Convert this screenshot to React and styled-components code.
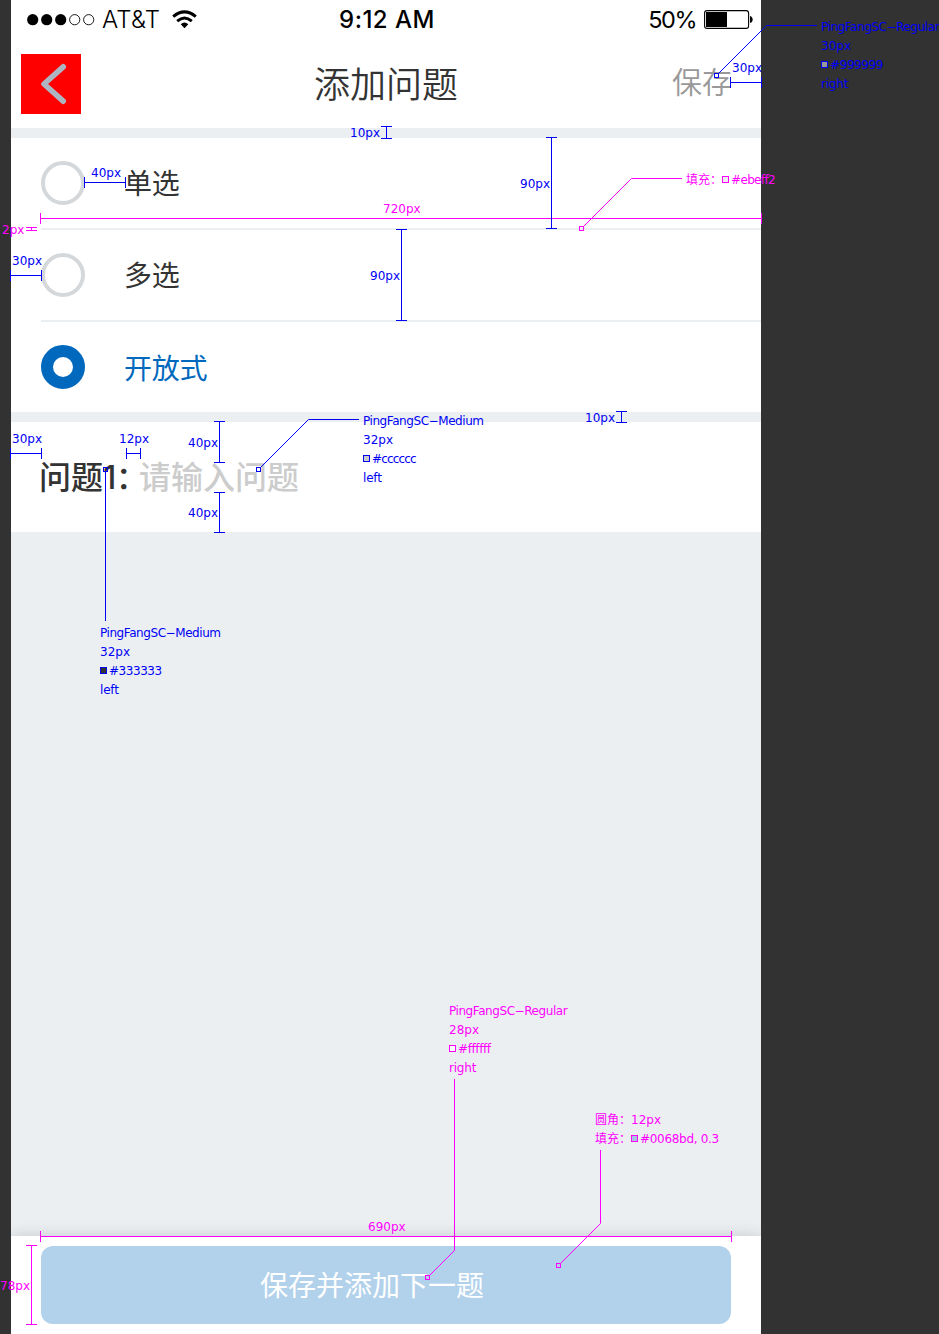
import React from 'react';
import styled, { createGlobalStyle } from 'styled-components';

const GlobalStyle = createGlobalStyle`
  *, *::before, *::after { box-sizing: border-box; }
  html, body { margin: 0; background: #323232; }
  body { overflow: hidden; }
`;

const BLUE = '#0000f5';
const PINK = '#ff00ff';
const CJK = '"Noto Sans CJK SC", sans-serif';

const Board = styled.div`
  position: relative;
  width: 939px;
  height: 1334px;
  padding-left: 11px;
  overflow: hidden;
  background: #323232;
  font-family: ${CJK};
`;

const Phone = styled.main`
  display: flex;
  flex-direction: column;
  width: 750px;
  height: 1334px;
  background: #ebeff2;
`;

const StatusBar = styled.div`
  display: grid;
  grid-template-columns: 1fr auto 1fr;
  align-items: center;
  height: 40px;
  padding: 0 7px 0 16px;
  background: #fff;
  color: #000;
  font-family: Inter, sans-serif;
  font-size: 24px;
  line-height: 40px;
`;

const Carrier = styled.div`
  display: flex;
  align-items: center;
`;

const CarrierName = styled.span`
  margin: 0 12px 0 7px;
  font-weight: 300;
  letter-spacing: 0.2px;
`;

const Clock = styled.span`
  margin-right: 7px;
  font-weight: 500;
  letter-spacing: 0.5px;
`;

const Power = styled.div`
  display: flex;
  align-items: center;
  justify-content: flex-end;
  gap: 8px;
  font-size: 23.5px;
  letter-spacing: -1.5px;
`;

const Header = styled.header`
  display: grid;
  grid-template-columns: 1fr auto 1fr;
  align-items: center;
  height: 88px;
  padding: 0 30px 0 10px;
  background: #fff;
`;

const BackButton = styled.button`
  display: flex;
  width: 60px;
  height: 60px;
  padding: 0;
  border: 0;
  background: #f00;
`;

const Title = styled.h1`
  margin: 0 0 4px 20px;
  color: #333;
  font-size: 36px;
  font-weight: 350;
  line-height: 84px;
`;

const SaveLink = styled.span`
  justify-self: end;
  margin: 0 -1px 8px 0;
  color: #999;
  font-size: 30px;
  font-weight: 350;
  line-height: 80px;
`;

const Options = styled.section`
  margin-top: 10px;
  padding-left: 30px;
  background: #fff;
`;

const Option = styled.label`
  display: flex;
  align-items: center;
  gap: 39px;
  height: ${({ $last }) => ($last ? 90 : 92)}px;
  border-bottom: ${({ $last }) => ($last ? '0' : '2px solid #ebeff2')};
  color: ${({ $checked }) => ($checked ? '#0068bd' : '#333')};
`;

const OptionText = styled.span`
  padding-bottom: ${({ $raised }) => ($raised ? 2 : 0)}px;
  font-size: 28px;
  line-height: 40px;
  letter-spacing: -0.3px;
`;

const Radio = styled.span`
  width: 44px;
  height: 44px;
  border: ${({ $checked }) => ($checked ? '12px solid #0068bd' : '4px solid #d5d8db')};
  border-radius: 50%;
  background: #fff;
`;

const Question = styled.section`
  display: flex;
  align-items: center;
  height: 110px;
  margin-top: 10px;
  padding: 0 0 4px 28px;
  background: #fff;
  font-size: 32px;
  font-weight: 500;
  line-height: 40px;
`;

const QuestionLabel = styled.span`
  width: 100px;
  color: #333;
  white-space: nowrap;
`;

const QuestionNumber = styled.span`
  font-family: Inter, sans-serif;
  line-height: 0;
  letter-spacing: -0.5px;
`;

const Colon = styled.span`
  letter-spacing: -13px;
`;

const Placeholder = styled.span`
  color: #ccc;
`;

const Footer = styled.footer`
  height: 98px;
  margin-top: auto;
  padding: 10px 30px;
  background: #fff;
  box-shadow: 0 0 14px rgba(0, 0, 0, 0.16);
  clip-path: inset(-20px 0 0 0);
`;

const SubmitButton = styled.button`
  display: block;
  width: 690px;
  height: 78px;
  padding: 0 28px 2px 0;
  border: 0;
  border-radius: 12px;
  background: #b2d1eb;
  color: #fff;
  font-family: ${CJK};
  font-size: 28px;
  line-height: 76px;
`;

const Markup = styled.div`
  position: absolute;
  inset: 0;
  pointer-events: none;
`;

const MarkupLines = styled.svg`
  position: absolute;
  inset: 0;
  display: block;
`;

const Note = styled.div`
  position: absolute;
  left: ${({ $x }) => $x}px;
  top: ${({ $y }) => $y}px;
  color: ${({ $color }) => $color};
  font-family: "DejaVu Sans", ${CJK};
  font-size: 12px;
  line-height: 19px;
  white-space: pre;
`;

const NoteLine = styled.div`
  display: flex;
  align-items: center;
  height: 19px;
  letter-spacing: ${({ $track }) => $track || 0}px;
`;

const Swatch = styled.i`
  width: 7px;
  height: 7px;
  margin: 0 2px 2px 0;
  border: 1px solid currentColor;
  background: ${({ $fill }) => $fill};
`;

const sizes = [
  [350, 124, '10px', BLUE], [520, 175, '90px', BLUE], [370, 267, '90px', BLUE],
  [91, 164, '40px', BLUE], [12, 252, '30px', BLUE], [12, 430, '30px', BLUE],
  [119, 430, '12px', BLUE], [188, 434, '40px', BLUE], [188, 504, '40px', BLUE],
  [585, 409, '10px', BLUE], [732, 59, '30px', BLUE],
  [383, 200, '720px', PINK], [2, 221, '2px', PINK],
  [368, 1218, '690px', PINK], [0, 1277, '78px', PINK],
];

const horizontals = [
  [730, 761, 82, BLUE], [84, 125, 182, BLUE], [10, 41, 275, BLUE],
  [10, 41, 453, BLUE], [126, 140, 453, BLUE], [40, 761, 218, PINK], [40, 731, 1236, PINK],
];

const verticals = [
  [386, 126, 138, BLUE], [551, 137, 228, BLUE], [401, 229, 320, BLUE],
  [621, 411, 422, BLUE], [219, 421, 462, BLUE], [219, 492, 532, BLUE],
  [31, 227, 230, PINK], [31, 1245, 1324, PINK],
];

const leaders = [
  { d: 'M817 25.5H766.5L718.5 73.5', box: [714, 73], color: BLUE },
  { d: 'M359 419.5H308.5L260.5 467.5', box: [256, 467], color: BLUE },
  { d: 'M105.5 621V471', box: [103, 467], color: BLUE },
  { d: 'M682 178.5H631.5L583.5 226.5', box: [579, 226], color: PINK },
  { d: 'M454.5 1079V1250.5L429.5 1275.5', box: [425, 1275], color: PINK },
  { d: 'M600.5 1150V1223.5L560.5 1263.5', box: [556, 1263], color: PINK },
];

function Signal() {
  return (
    <svg width="68" height="12" viewBox="0 0 68 12">
      {[0, 1, 2, 3, 4].map((i) => (
        <circle key={i} cx={5.7 + i * 14} cy="5.7" r={i < 3 ? 5.6 : 5.1}
          fill={i < 3 ? '#000' : 'none'} stroke={i < 3 ? 'none' : '#000'} strokeWidth="0.9" />
      ))}
    </svg>
  );
}

function Wifi() {
  return (
    <svg width="25" height="20" viewBox="0 0 25 20" fill="none" stroke="#000">
      <path d="M1.2 6.6Q12.5 -2.8 23.8 6.6" strokeWidth="3" />
      <path d="M5.2 11.2Q12.5 4.8 19.8 11.2" strokeWidth="2.9" />
      <path d="M8.7 14.3Q12.5 10.9 16.3 14.3L12.5 18.2Z" fill="#000" stroke="none" />
    </svg>
  );
}

function Battery() {
  return (
    <svg width="50" height="20" viewBox="0 0 50 20">
      <rect x="0.6" y="0.6" width="44" height="17.8" rx="2.5" fill="none" stroke="#000" strokeWidth="1.1" />
      <rect x="2" y="2" width="21" height="15" fill="#000" />
      <path d="M46 6C49.6 7 49.6 12 46 13Z" fill="#000" />
    </svg>
  );
}

function Markings() {
  return (
    <Markup>
      <MarkupLines width="939" height="1334" fill="none">
        {horizontals.map(([a, b, y, c]) => (
          <path key={`${a}-${y}`} stroke={c} d={`M${a} ${y + 0.5}H${b + 1}M${a + 0.5} ${y - 5}v11M${b + 0.5} ${y - 5}v11`} />
        ))}
        {verticals.map(([x, a, b, c]) => (
          <path key={`${x}-${a}`} stroke={c} d={`M${x + 0.5} ${a}V${b + 1}M${x - 5} ${a + 0.5}h11M${x - 5} ${b + 0.5}h11`} />
        ))}
        {leaders.map(({ d, box, color }) => (
          <g key={d} stroke={color}>
            <path d={d} />
            <rect x={box[0] + 0.5} y={box[1] + 0.5} width="4" height="4" />
          </g>
        ))}
      </MarkupLines>
      {sizes.map(([x, y, text, color]) => (
        <Note key={`${x}-${y}`} $x={x} $y={y} $color={color}>{text}</Note>
      ))}
      <Note $x={821} $y={18} $color={BLUE}>
        <NoteLine $track={-0.45}>PingFangSC−Regular</NoteLine>
        <NoteLine>30px</NoteLine>
        <NoteLine $track={-0.4}><Swatch $fill="#999" />#999999</NoteLine>
        <NoteLine $track={-0.2}>right</NoteLine>
      </Note>
      <Note $x={363} $y={412} $color={BLUE}>
        <NoteLine $track={-0.43}>PingFangSC−Medium</NoteLine>
        <NoteLine>32px</NoteLine>
        <NoteLine $track={-0.85}><Swatch $fill="#ccc" />#cccccc</NoteLine>
        <NoteLine $track={-0.2}>left</NoteLine>
      </Note>
      <Note $x={100} $y={624} $color={BLUE}>
        <NoteLine $track={-0.43}>PingFangSC−Medium</NoteLine>
        <NoteLine>32px</NoteLine>
        <NoteLine $track={-0.45}><Swatch $fill="#333" />#333333</NoteLine>
        <NoteLine $track={-0.2}>left</NoteLine>
      </Note>
      <Note $x={449} $y={1002} $color={PINK}>
        <NoteLine $track={-0.43}>PingFangSC−Regular</NoteLine>
        <NoteLine>28px</NoteLine>
        <NoteLine $track={-0.4}><Swatch $fill="#fff" />#ffffff</NoteLine>
        <NoteLine $track={-0.2}>right</NoteLine>
      </Note>
      <Note $x={686} $y={171} $color={PINK}>
        <NoteLine>填充：<Swatch $fill="#ebeff2" /></NoteLine>
      </Note>
      <Note $x={731} $y={171} $color={PINK}>
        <NoteLine $track={-0.65}>#ebeff2</NoteLine>
      </Note>
      <Note $x={595} $y={1111} $color={PINK}>
        <NoteLine>圆角：12px</NoteLine>
        <NoteLine>填充：<Swatch $fill="#a5c6df" /></NoteLine>
      </Note>
      <Note $x={640} $y={1130} $color={PINK}>
        <NoteLine $track={-0.3}>#0068bd, 0.3</NoteLine>
      </Note>
    </Markup>
  );
}

export default function App() {
  return (
    <>
      <GlobalStyle />
      <Board>
        <Phone>
          <StatusBar>
            <Carrier><Signal /><CarrierName>AT&amp;T</CarrierName><Wifi /></Carrier>
            <Clock>9:12 AM</Clock>
            <Power>50%<Battery /></Power>
          </StatusBar>
          <Header>
            <BackButton aria-label="返回">
              <svg width="60" height="60" viewBox="0 0 60 60" fill="none">
                <path d="M42.2 12.8L23 30L42.2 47.2" stroke="#adb5c2" strokeWidth="5.6" strokeLinecap="round" strokeLinejoin="round" />
              </svg>
            </BackButton>
            <Title>添加问题</Title>
            <SaveLink>保存</SaveLink>
          </Header>
          <Options>
            <Option><Radio /><OptionText $raised>单选</OptionText></Option>
            <Option><Radio /><OptionText $raised>多选</OptionText></Option>
            <Option $checked $last><Radio $checked /><OptionText>开放式</OptionText></Option>
          </Options>
          <Question>
            <QuestionLabel>问题<QuestionNumber>1</QuestionNumber><Colon>：</Colon></QuestionLabel>
            <Placeholder>请输入问题</Placeholder>
          </Question>
          <Footer><SubmitButton>保存并添加下一题</SubmitButton></Footer>
        </Phone>
        <Markings />
      </Board>
    </>
  );
}
